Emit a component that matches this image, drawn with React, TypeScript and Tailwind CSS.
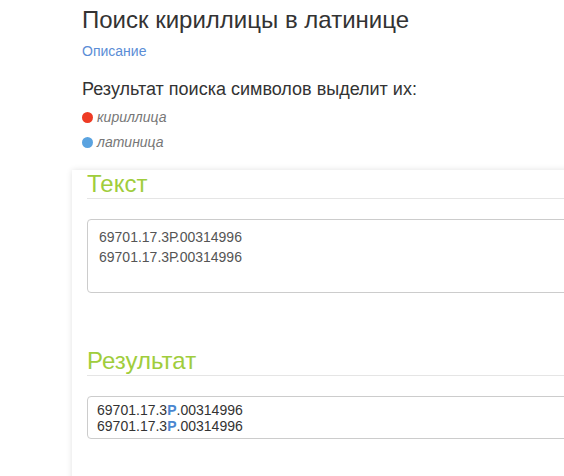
const lines = ['69701.17.3Р.00314996', '69701.17.3Р.00314996']

function Highlighted({ text }: { text: string }) {
  // кириллица — синим жирным (как в оригинале)
  return (
    <>
      {text.split('').map((ch, i) =>
        /[\u0400-\u04FF]/.test(ch) ? (
          <b key={i} className="font-bold text-[#4a86cf]">{ch}</b>
        ) : (
          <span key={i}>{ch}</span>
        )
      )}
    </>
  )
}

export default function App() {
  return (
    <div className="w-[564px] h-[476px] overflow-hidden bg-white font-['Liberation_Sans',Arial,sans-serif] text-[#333]">
      <div className="pl-[82px]">
        <h3 className="mt-[7px] text-[24px] leading-[26px] text-[#333]">Поиск кириллицы в латинице</h3>
        <a href="#" className="block mt-[8px] text-[14px] leading-[20px] text-[#5b8dd6] w-fit">Описание</a>
        <p className="mt-[18px] text-[18px] leading-[20px] text-[#333]">Результат поиска символов выделит их:</p>
        <ul className="mt-[8px] flex flex-col gap-[5px] text-[14px] leading-[20px] italic text-[#777]">
          <li className="flex items-center gap-[4px]">
            <span className="w-[11px] h-[11px] rounded-full bg-[#ee3b24]" />
            кириллица
          </li>
          <li className="flex items-center gap-[4px]">
            <span className="w-[11px] h-[11px] rounded-full bg-[#5aa3e0]" />
            латиница
          </li>
        </ul>

        <div className="mt-[18px] -ml-[10px] w-[620px] h-[400px] bg-white shadow-[0_0_6px_rgba(0,0,0,0.12)] pl-[15px] pt-px">
          <h3 className="text-[24px] leading-[26px] pb-px text-[#a0cd3c] border-b border-[#e5e5e5]">Текст</h3>
          <textarea
            readOnly
            value={lines.join('\n')}
            className="block mt-5 w-[560px] h-[74px] resize-none border border-[#ccc] rounded-[4px] pl-[11px] pt-[7px] text-[14px] leading-[20px] text-[#555] outline-none"
          />

          <h3 className="mt-[55px] text-[24px] leading-[26px] pb-px text-[#a0cd3c] border-b border-[#e5e5e5]">Результат</h3>
          <div className="mt-5 w-[560px] border border-[#ccc] rounded-[4px] pl-[9px] pt-[5px] pb-[4px] text-[14px] leading-[16px] text-[#333]">
            {lines.map((l, i) => (
              <div key={i}>
                <Highlighted text={l} />
              </div>
            ))}
          </div>
        </div>
      </div>
    </div>
  )
}
